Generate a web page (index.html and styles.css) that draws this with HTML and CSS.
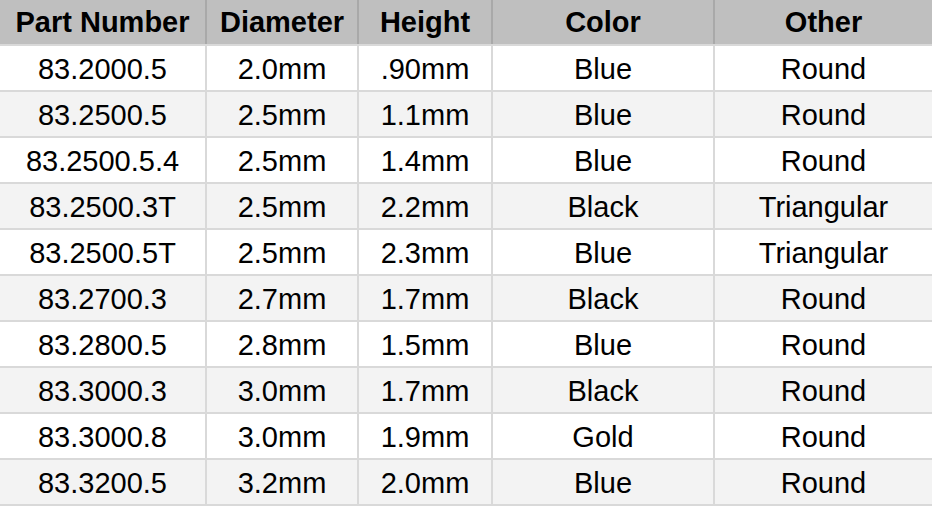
FILE: index.html
```html
<!DOCTYPE html>
<html>
<head>
<meta charset="utf-8">
<link rel="stylesheet" href="styles.css">
</head>
<body>
<div class="sheet">
  <div class="row head">
    <div class="cell">Part Number</div><div class="cell">Diameter</div><div class="cell">Height</div><div class="cell">Color</div><div class="cell">Other</div>
  </div>
  <div class="row"><div class="cell">83.2000.5</div><div class="cell">2.0mm</div><div class="cell">.90mm</div><div class="cell">Blue</div><div class="cell">Round</div></div>
  <div class="row alt"><div class="cell">83.2500.5</div><div class="cell">2.5mm</div><div class="cell">1.1mm</div><div class="cell">Blue</div><div class="cell">Round</div></div>
  <div class="row"><div class="cell">83.2500.5.4</div><div class="cell">2.5mm</div><div class="cell">1.4mm</div><div class="cell">Blue</div><div class="cell">Round</div></div>
  <div class="row alt"><div class="cell">83.2500.3T</div><div class="cell">2.5mm</div><div class="cell">2.2mm</div><div class="cell">Black</div><div class="cell">Triangular</div></div>
  <div class="row"><div class="cell">83.2500.5T</div><div class="cell">2.5mm</div><div class="cell">2.3mm</div><div class="cell">Blue</div><div class="cell">Triangular</div></div>
  <div class="row alt"><div class="cell">83.2700.3</div><div class="cell">2.7mm</div><div class="cell">1.7mm</div><div class="cell">Black</div><div class="cell">Round</div></div>
  <div class="row"><div class="cell">83.2800.5</div><div class="cell">2.8mm</div><div class="cell">1.5mm</div><div class="cell">Blue</div><div class="cell">Round</div></div>
  <div class="row alt"><div class="cell">83.3000.3</div><div class="cell">3.0mm</div><div class="cell">1.7mm</div><div class="cell">Black</div><div class="cell">Round</div></div>
  <div class="row"><div class="cell">83.3000.8</div><div class="cell">3.0mm</div><div class="cell">1.9mm</div><div class="cell">Gold</div><div class="cell">Round</div></div>
  <div class="row alt"><div class="cell">83.3200.5</div><div class="cell">3.2mm</div><div class="cell">2.0mm</div><div class="cell">Blue</div><div class="cell">Round</div></div>
</div>
</body>
</html>
```
FILE: styles.css
```css
html, body {
  margin: 0;
  padding: 0;
  background: #ffffff;
}
.sheet {
  width: 932px;
  display: flex;
  flex-direction: column;
  font-family: "Liberation Sans", Arial, sans-serif;
  font-size: 29px;
  color: #000000;
}
.row {
  display: grid;
  grid-template-columns: 207px 152px 134px 222px 217px;
  height: 46px;
  box-sizing: border-box;
  border-bottom: 2px solid #d9d9d9;
  background: #ffffff;
}
.row.alt {
  background: #f3f3f3;
}
.row.head {
  background: #bfbfbf;
  font-weight: bold;
}
.cell {
  display: flex;
  align-items: center;
  justify-content: center;
  box-sizing: border-box;
  border-right: 2px solid #d9d9d9;
  padding-top: 3px;
  white-space: nowrap;
}
.head .cell {
  border-right-color: #a9a9a9;
  padding-top: 1px;
}
.cell:last-child {
  border-right: none;
}
```
